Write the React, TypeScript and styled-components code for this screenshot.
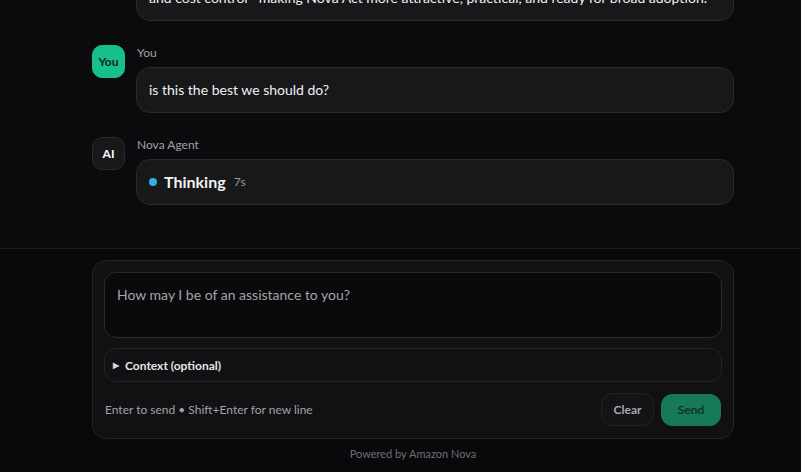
import React from "react";
import styled, { createGlobalStyle } from "styled-components";

const Global = createGlobalStyle`
  html, body { margin: 0; padding: 0; background: #0a0a0c; }
  body { font-family: "Segoe UI", Lato, "Noto Sans", sans-serif; color: #ececf0; }
  * { box-sizing: border-box; }
`;

const Page = styled.div`
  width: 801px;
  height: 472px;
  display: flex;
  flex-direction: column;
  overflow: hidden;
  background: #0a0a0c;
`;

const Messages = styled.div`
  height: 249px;
  flex: none;
  overflow: hidden;
  display: flex;
  flex-direction: column;
  justify-content: flex-end;
  padding: 0 67px 43px 92px;
  border-bottom: 1px solid #1c1c20;
  background: #0b0b0d;
`;

const Row = styled.div`
  display: flex;
  gap: 11px;
  align-items: flex-start;
  & + & { margin-top: 24px; }
`;

const Avatar = styled.div<{ $user?: boolean; $hidden?: boolean }>`
  width: 33px;
  height: 33px;
  flex: none;
  border-radius: 10px;
  display: flex;
  align-items: center;
  justify-content: center;
  font-size: 12px;
  font-weight: 700;
  visibility: ${(p) => (p.$hidden ? "hidden" : "visible")};
  background: ${(p) => (p.$user ? "#17bf8b" : "#18181b")};
  color: ${(p) => (p.$user ? "#0b2a1f" : "#ffffff")};
  border: 1px solid ${(p) => (p.$user ? "#17bf8b" : "#2a2a2e")};
`;

const Body = styled.div`
  flex: 1;
  min-width: 0;
`;

const Name = styled.div`
  font-size: 12px;
  line-height: 16px;
  color: #a1a1aa;
  margin-left: 1px;
`;

const Bubble = styled.div`
  margin-top: 6px;
  background: #18181b;
  border: 1px solid #2a2a2e;
  border-radius: 14px;
  padding: 12px 12px;
  font-size: 14px;
  line-height: 20px;
  color: #f0f0f3;
`;

const Thinking = styled.div`
  display: flex;
  align-items: center;
  gap: 8px;
`;

const Dot = styled.span`
  width: 8px;
  height: 8px;
  border-radius: 50%;
  background: #38aee6;
  margin-right: -1px;
`;

const ThinkLabel = styled.span`
  font-size: 16px;
  font-weight: 700;
  color: #f2f2f5;
`;

const Secs = styled.span`
  font-size: 12px;
  color: #9a9aa2;
`;

const Bottom = styled.div`
  flex: 1;
  padding: 11px 67px 0 92px;
  background: #09090b;
`;

const Card = styled.div`
  background: #111113;
  border: 1px solid #242428;
  border-radius: 14px;
  padding: 11px 11px 12px;
  display: flex;
  flex-direction: column;
`;

const Input = styled.textarea`
  height: 66px;
  resize: none;
  background: #0a0a0c;
  border: 1px solid #2a2a2e;
  border-radius: 12px;
  padding: 12px 12px;
  font-family: inherit;
  font-size: 14px;
  line-height: 20px;
  color: #f0f0f3;
  outline: none;
  &::placeholder { color: #a3a3ab; }
`;

const Details = styled.details`
  margin-top: 10px;
  border: 1px solid #242428;
  border-radius: 12px;
  background: #111113;
`;

const Summary = styled.summary`
  list-style: none;
  height: 32px;
  display: flex;
  align-items: center;
  gap: 6px;
  padding: 0 8px;
  font-size: 12px;
  font-weight: 700;
  color: #e4e4e8;
  cursor: pointer;
  &::-webkit-details-marker { display: none; }
`;

const Caret = styled.span`
  font-size: 8px;
  color: #d4d4d8;
`;

const Footer = styled.div`
  margin-top: 11px;
  display: flex;
  align-items: center;
  justify-content: space-between;
`;

const Hint = styled.span`
  font-size: 12px;
  color: #a1a1aa;
  margin-left: 1px;
`;

const Buttons = styled.div`
  display: flex;
  gap: 7px;
  align-items: center;
  margin-right: 1px;
`;

const Button = styled.button<{ $primary?: boolean }>`
  height: ${(p) => (p.$primary ? "32px" : "33px")};
  width: ${(p) => (p.$primary ? "60px" : "53px")};
  border-radius: 11px;
  font-family: inherit;
  font-size: 12px;
  font-weight: ${(p) => (p.$primary ? 600 : 700)};
  border: 1px solid ${(p) => (p.$primary ? "#167a58" : "#222226")};
  background: ${(p) => (p.$primary ? "#167a58" : "#141416")};
  color: ${(p) => (p.$primary ? "#0b3024" : "#a8a8b0")};
  cursor: pointer;
`;

const Powered = styled.div`
  margin-top: 8px;
  text-align: center;
  font-size: 11px;
  line-height: 14px;
  color: #6e6e76;
`;

export default function App() {
  return (
    <Page>
      <Global />
      <Messages>
        <Row>
          <Avatar $hidden />
          <Body>
            <Bubble>
              and cost control—making Nova Act more attractive, practical, and ready for broad adoption.
            </Bubble>
          </Body>
        </Row>
        <Row>
          <Avatar $user>You</Avatar>
          <Body>
            <Name>You</Name>
            <Bubble>is this the best we should do?</Bubble>
          </Body>
        </Row>
        <Row>
          <Avatar>AI</Avatar>
          <Body>
            <Name>Nova Agent</Name>
            <Bubble>
              <Thinking>
                <Dot />
                <ThinkLabel>Thinking</ThinkLabel>
                <Secs>7s</Secs>
              </Thinking>
            </Bubble>
          </Body>
        </Row>
      </Messages>
      <Bottom>
        <Card>
          <Input placeholder="How may I be of an assistance to you?" />
          <Details>
            <Summary>
              <Caret>▶</Caret>
              Context (optional)
            </Summary>
          </Details>
          <Footer>
            <Hint>Enter to send • Shift+Enter for new line</Hint>
            <Buttons>
              <Button>Clear</Button>
              <Button $primary>Send</Button>
            </Buttons>
          </Footer>
        </Card>
        <Powered>Powered by Amazon Nova</Powered>
      </Bottom>
    </Page>
  );
}
